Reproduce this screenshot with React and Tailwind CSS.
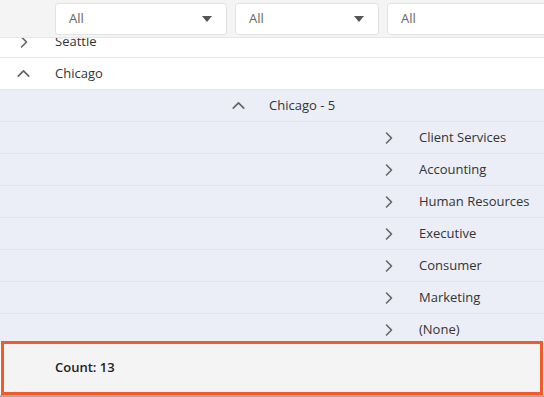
import React from "react";
import { ChevronRight, ChevronUp } from "lucide-react";

const departments = [
  "Client Services",
  "Accounting",
  "Human Resources",
  "Executive",
  "Consumer",
  "Marketing",
  "(None)",
];

const FilterBox = ({ width, arrow }) => (
  <div
    className={`h-8 ${width} bg-white border border-[#e3e3e3] rounded-[3px] flex items-center justify-between pl-[13px] pr-[14px] shrink-0`}
  >
    <span className="text-[13px] text-[#666]">All</span>
    {arrow && (
      <svg width="10" height="6" viewBox="0 0 10 6">
        <path d="M0 0h10L5 6z" fill="#555" />
      </svg>
    )}
  </div>
);

const App = () => {
  return (
    <div
      className="w-[544px] h-[397px] overflow-hidden bg-white relative flex flex-col text-[#333]"
      style={{ fontFamily: '"Open Sans", "Noto Sans", sans-serif' }}
    >
      {/* filter row */}
      <div className="h-[38px] shrink-0 bg-[#f4f4f4] border-b border-[#e6e6e6] flex items-center gap-2 pl-[55px]">
        <FilterBox width="w-[172px]" arrow />
        <FilterBox width="w-[144px]" arrow />
        <FilterBox width="w-[170px]" />
      </div>

      {/* grid body */}
      <div className="h-[303px] shrink-0 overflow-hidden">
        <div className="-mt-[12px]">
          <div className="h-8 flex items-center border-b border-[#e6e6e6] text-[13px]">
            <div className="w-[55px] flex justify-center pr-[8px]">
              <ChevronRight size={20} strokeWidth={1.9} className="text-[#636363]" />
            </div>
            Seattle
          </div>
          <div className="h-8 flex items-center border-b border-[#e6e6e6] text-[13px]">
            <div className="w-[55px] flex justify-center pr-[8px]">
              <ChevronUp size={21} strokeWidth={1.9} className="text-[#636363]" />
            </div>
            Chicago
          </div>
          <div className="h-8 flex items-center border-b border-[#e2e5ec] bg-[#ebeef6] text-[13px]">
            <div className="w-[269px] flex justify-end pr-[20px]">
              <ChevronUp size={21} strokeWidth={1.9} className="text-[#636363]" />
            </div>
            Chicago - 5
          </div>
          {departments.map((d) => (
            <div
              key={d}
              className="h-8 flex items-center border-b border-[#e2e5ec] bg-[#ebeef6] text-[13px]"
            >
              <div className="w-[419px] flex justify-end pr-[20px]">
                <ChevronRight size={20} strokeWidth={1.9} className="text-[#636363]" />
              </div>
              {d}
            </div>
          ))}
        </div>
      </div>

      {/* footer */}
      <div className="mx-[1px] h-[54px] shrink-0 border-[3px] border-[#f15a2b] bg-[#f4f4f4] flex items-center pl-[51px]">
        <span className="text-[13px] font-semibold text-[#222]">Count: 13</span>
      </div>
      <div className="flex-1 bg-[#a9a9a9]" />
    </div>
  );
};

export default App;
